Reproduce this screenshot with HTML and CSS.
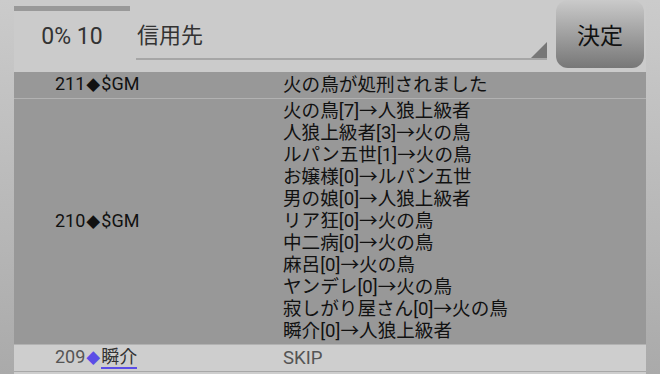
FILE: index.html
```html
<!DOCTYPE html>
<html lang="ja">
<head>
  <meta charset="UTF-8">
  <meta name="viewport" content="width=device-width, initial-scale=1.0">
  <title>投票結果</title>
  <link rel="stylesheet" href="styles.css">
</head>
<body>
  <div class="page">
    <div class="head">
      <div class="counter">
        <div class="bar"></div>
        <span class="count">0% 10</span>
      </div>
      <div class="select">
        <span class="select-text">信用先</span>
      </div>
      <button class="decide">決定</button>
    </div>

    <div class="log">
      <div class="row">
        <div class="who">211<span class="dia">◆</span>$GM</div>
        <div class="msg">火の鳥が処刑されました</div>
      </div>
      <div class="row">
        <div class="who">210<span class="dia">◆</span>$GM</div>
        <div class="msg">
          火の鳥[7]→人狼上級者<br>
          人狼上級者[3]→火の鳥<br>
          ルパン五世[1]→火の鳥<br>
          お嬢様[0]→ルパン五世<br>
          男の娘[0]→人狼上級者<br>
          リア狂[0]→火の鳥<br>
          中二病[0]→火の鳥<br>
          麻呂[0]→火の鳥<br>
          ヤンデレ[0]→火の鳥<br>
          寂しがり屋さん[0]→火の鳥<br>
          瞬介[0]→人狼上級者
        </div>
      </div>
      <div class="row light">
        <div class="who">209<span class="dia mark">◆</span><span class="name">瞬介</span></div>
        <div class="msg">SKIP</div>
      </div>
      <div class="row light tail"></div>
    </div>
  </div>
</body>
</html>
```

FILE: styles.css
```css
html, body {
  margin: 0;
  height: 100%;
}

body {
  background: linear-gradient(#cbcbcb, #aaaaaa);
  font-family: Roboto, "Noto Sans CJK JP", sans-serif;
  overflow: hidden;
}

.page {
  margin: 0 14px;
  width: 632px;
}

/* 上部 */
.head {
  height: 72px;
  background-color: #cbcbcb;
  display: flex;
  align-items: flex-start;
}

.counter {
  width: 116px;
  display: flex;
  flex-direction: column;
  align-items: center;
}

.bar {
  width: 116px;
  height: 5px;
  margin-top: 6px;
  background-color: #999;
}

.count {
  margin-top: 12px;
  font-size: 23px;
  color: #333;
}

.select {
  position: relative;
  width: 411px;
  height: 60px;
  margin-left: 6px;
  border-bottom: 2px solid #a6a6a6;
  box-sizing: border-box;
}

.select::after {
  content: "";
  position: absolute;
  right: 0;
  bottom: 0;
  border-style: solid;
  border-width: 0 0 16px 16px;
  border-color: transparent transparent #777 transparent;
}

.select-text {
  display: block;
  margin-top: 17px;
  margin-left: 1px;
  font-size: 22px;
  color: #333;
}

.decide {
  width: 88px;
  height: 68px;
  margin-left: 9px;
  border: none;
  border-radius: 12px;
  background: linear-gradient(#cacaca, #777);
  font-family: Roboto, "Noto Sans CJK JP", sans-serif;
  font-size: 23px;
  color: #111;
  padding: 0;
}

/* ログ */
.log {
  background-color: #999;
}

.row {
  display: grid;
  grid-template-columns: 269px 1fr;
  align-items: center;
  border-bottom: 1px solid #b2b2b2;
  background-color: #989898;
  padding: 1px 0 2px;
  font-size: 18px;
  line-height: 22px;
  color: #111;
}

.row.light {
  background-color: #cecece;
  border-bottom: 1px solid #a8a8a8;
  color: #555;
}

.tail {
  height: 22px;
}

.who {
  padding-left: 41px;
}

.dia {
  font-size: 14px;
  margin: 0 1px;
}

.mark {
  color: #5b4de6;
}

.name {
  color: #333;
  border-bottom: 2px solid #5b4de6;
}

.msg {
  white-space: nowrap;
  font-size: 18.6px;
}
```
